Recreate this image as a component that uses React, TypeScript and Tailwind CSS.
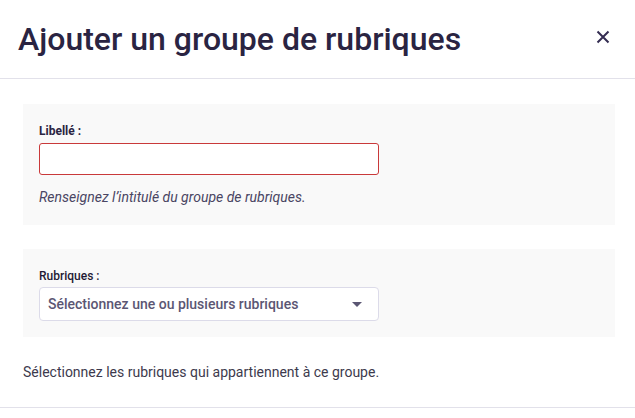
import React from "react";

export default function App() {
  return (
    <div className="w-[635px] h-[418px] bg-white overflow-hidden" style={{ fontFamily: "Roboto, 'Liberation Sans', sans-serif" }}>
      <div className="h-[79px] flex items-center justify-between pl-[18px] pr-[24px] border-b border-[#e2e1ea]">
        <h1 className="text-[32px] leading-[40px] font-medium text-[#2a2442]">Ajouter un groupe de rubriques</h1>
        <button className="w-[16px] h-[16px] flex items-center justify-center -mt-[4px]">
          <svg width="14" height="14" viewBox="0 0 14 14" fill="none">
            <path d="M1.5 1.5L12.5 12.5M12.5 1.5L1.5 12.5" stroke="#352d52" strokeWidth="2" />
          </svg>
        </button>
      </div>
      <div className="pl-[23px] pr-[20px] pt-[25px]">
        <div className="bg-[#f9f9f9] pl-[16px] pt-[19px] pb-[18px]">
          <div className="text-[12px] leading-[16px] font-bold text-[#2a2442] mb-[4px]">Libellé :</div>
          <div className="w-[340px] h-[32px] bg-white border border-[#c9393a] rounded-[3px]"></div>
          <div className="mt-[12px] text-[14px] leading-[20px] italic text-[#4a4663]">Renseignez l’intitulé du groupe de rubriques.</div>
        </div>
        <div className="bg-[#f9f9f9] pl-[16px] pt-[19px] pb-[16px] mt-[24px]">
          <div className="text-[12px] leading-[16px] font-medium text-[#1f1a35] mb-[3px]">Rubriques :</div>
          <div className="w-[340px] h-[34px] bg-white border border-[#dcdbe9] rounded-[4px] flex items-center justify-between pl-[8px] pr-[16px]">
            <span className="text-[14px] leading-[20px] font-medium text-[#5b5673]">Sélectionnez une ou plusieurs rubriques</span>
            <svg width="10" height="5" viewBox="0 0 10 5">
              <path d="M0 0H10L5 5Z" fill="#5b5673" />
            </svg>
          </div>
        </div>
        <div className="mt-[25px] text-[14px] leading-[20px] text-[#3d3a4d]">Sélectionnez les rubriques qui appartiennent à ce groupe.</div>
      </div>
      <div className="mt-[25px] border-t border-[#e2e1ea]"></div>
    </div>
  );
}
